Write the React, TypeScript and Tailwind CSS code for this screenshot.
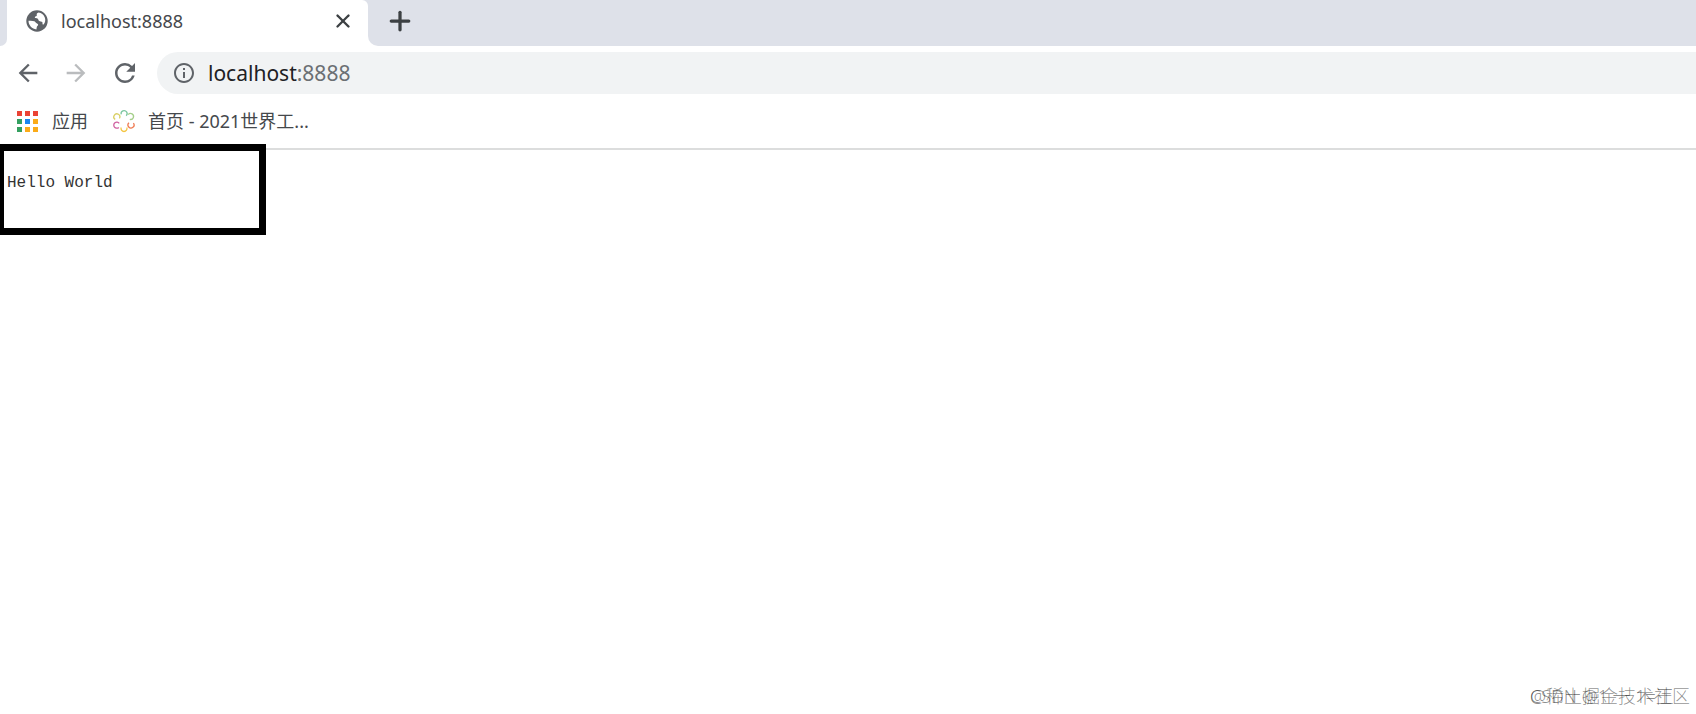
import { X, Plus } from 'lucide-react';
import { MdArrowBack, MdArrowForward, MdRefresh, MdInfoOutline } from 'react-icons/md';

const APP_DOTS = [
  'bg-[#ea4335]', 'bg-[#ea4335]', 'bg-[#ea4335]',
  'bg-[#34a060]', 'bg-[#1a86f0]', 'bg-[#fbab18]',
  'bg-[#34a060]', 'bg-[#fbab18]', 'bg-[#fbab18]',
];

function GlobeIcon() {
  return (
    <svg width="22" height="22" viewBox="0 0 22 22" className="shrink-0">
      <circle cx="11" cy="11" r="10.7" fill="#5f6368" />
      <path
        d="M12.6 2.6c-1.6.5-2.2 1.4-1.8 2.3.3.8-.6 1.2-1.4 1.6-1 .5-.6 1.5.4 1.6 1.4.1 2.4.7 2.7 2 .2 1 1.1 1.3 2.2 1.3 1.5 0 2 .8 1.8 1.9-.2 1.2.6 1.7 1.3.9 1.5-1.8 1.9-4.4 1-6.700-1-2.700-3.500-4.500-6.200-4.900z"
        fill="#fff"
      />
      <path
        d="M2.500 10.800c1.900-.3 4.300-.2 5.800.5 1.200.6 1.600 1.800 2.700 2.100 1.300.4 1.500 1.500.6 2.300-.8.7-.9 1.700-1.200 3.700-4.300-.2-7.900-4.200-7.900-8.600z"
        fill="#fff"
      />
    </svg>
  );
}

function TabStrip() {
  return (
    <div className="flex h-[46px] bg-[#dee1e9]">
      <div className="w-[7px] bg-white">
        <div className="h-full rounded-br-[8px] bg-[#dee1e9]" />
      </div>
      <div className="flex w-[361px] items-center rounded-tr-[6px] bg-white pb-1 pl-[19px] pr-[14px]">
        <GlobeIcon />
        <span className="ml-[13px] flex-1 text-[18px] leading-6 text-[#45484c]">localhost:8888</span>
        <button aria-label="Close tab" className="text-[#3c4043]">
          <X size={22} strokeWidth={2.6} />
        </button>
      </div>
      <div className="flex-1 bg-white">
        <div className="flex h-full items-center rounded-bl-[10px] bg-[#dee1e9] pb-1 pl-[17px]">
          <button aria-label="New tab" className="text-[#3c4043]">
            <Plus size={30} strokeWidth={2.6} />
          </button>
        </div>
      </div>
    </div>
  );
}

function Toolbar() {
  return (
    <div className="flex items-center pt-[6px]">
      <div className="flex w-[157px] items-center gap-5 pl-[14px]">
        <button aria-label="Back" className="text-[#5f6368]">
          <MdArrowBack size={28} />
        </button>
        <button aria-label="Forward" className="text-[#babcbe]">
          <MdArrowForward size={28} />
        </button>
        <button aria-label="Reload" className="text-[#5f6368]">
          <MdRefresh size={30} />
        </button>
      </div>
      <div className="flex h-[42px] flex-1 items-center rounded-l-full bg-[#f1f3f4] pl-[15px]">
        <MdInfoOutline size={24} className="text-[#5f6368]" />
        <span className="ml-3 text-[21px] leading-6 text-[#202124]">
          localhost<span className="text-[#6b6f73]">:8888</span>
        </span>
      </div>
    </div>
  );
}

function FlowerIcon() {
  return (
    <svg width="24" height="24" viewBox="0 0 24 24" fill="none" strokeWidth="1.3">
      <path d="M9.200 5.400a3 3 0 1 1 5 1.400" stroke="#7cc6a0" />
      <path d="M16.200 5.600a3 3 0 1 1 1.600 4.800" stroke="#a5cf8b" />
      <path d="M17 13.800a3 3 0 1 0 4.400.4" stroke="#ef7b52" />
      <path d="M9.200 18.400a3 3 0 1 0 5.600 0" stroke="#f4c542" />
      <path d="M6.800 18.400a3 3 0 1 1 .4-4" stroke="#cf5fa0" />
      <path d="M3.200 10.400a3 3 0 1 1 4.200-1" stroke="#d9cf62" />
    </svg>
  );
}

function BookmarksBar() {
  return (
    <nav className="flex h-14 items-center border-b-2 border-[#dcdddd] pl-[17px] text-[18px] leading-6 text-[#45484c]">
      <a href="#apps" className="flex items-center">
        <span className="grid grid-cols-3 gap-[3px]">
          {APP_DOTS.map((color, i) => (
            <span key={i} className={`h-[5px] w-[5px] ${color}`} />
          ))}
        </span>
        <span className="ml-[14px]">应用</span>
      </a>
      <a href="#home" className="ml-6 flex items-center">
        <FlowerIcon />
        <span className="ml-3">首页 - 2021世界工...</span>
      </a>
    </nav>
  );
}

export default function App() {
  return (
    <div className="relative flex min-h-screen flex-col bg-white font-['Noto_Sans','Noto_Sans_CJK_SC',sans-serif]">
      <TabStrip />
      <Toolbar />
      <BookmarksBar />
      <main className="flex-1">
        {/* Frame sits over the divider */}
        <div className="relative -mt-[6px] h-[91px] w-[266px] border-[7px] border-l-4 border-black bg-white pl-[3px] pt-5">
          <pre className="font-['Liberation_Mono',monospace] text-[16px] leading-6 text-[#333]">Hello World</pre>
        </div>
      </main>

      {/* Overlapping watermarks */}
      <div className="absolute bottom-[6px] right-[6px] grid text-[18px] leading-6 font-light text-black/45">
        <span className="col-start-1 row-start-1">@稀土掘金技术社区</span>
        <span className="col-start-1 row-start-1">CSDN @1 一 1=王</span>
      </div>
    </div>
  );
}
